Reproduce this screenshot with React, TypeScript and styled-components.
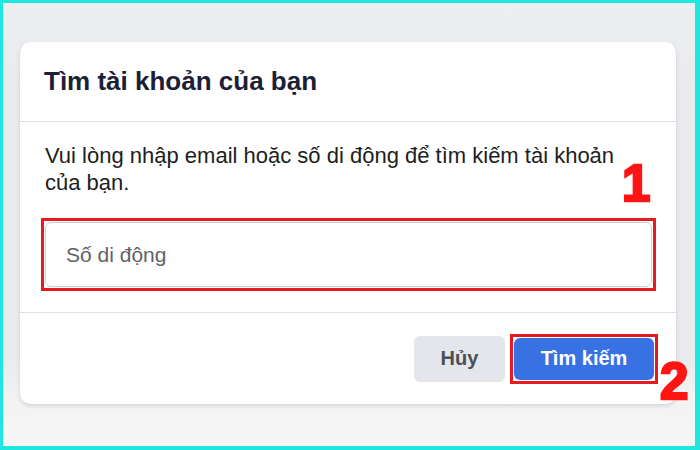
import React from "react";
import styled, { createGlobalStyle } from "styled-components";

const Global = createGlobalStyle`
  html, body { margin: 0; padding: 0; }
  body { font-family: "Liberation Sans", Arial, sans-serif; }
  * { box-sizing: border-box; }
`;

const Frame = styled.div`
  position: relative;
  width: 700px;
  height: 450px;
  border: 3px solid #1ee8dd;
  border-right-width: 5px;
  border-bottom-width: 4px;
  background: linear-gradient(180deg, #eceef0 0%, #e9ebee 20%, #e9ebee 80%, #f3f3f4 90%, #f6f6f6 100%);
  padding: 39px 0 0 17px;
  overflow: hidden;
`;

const Card = styled.div`
  width: 656px;
  height: 362px;
  background: #ffffff;
  border-radius: 10px;
  box-shadow: 0 2px 4px rgba(0, 0, 0, 0.12), 0 0 1px rgba(0, 0, 0, 0.1);
  display: flex;
  flex-direction: column;
`;

const Header = styled.div`
  height: 80px;
  display: flex;
  align-items: center;
  padding: 0 24px;
  border-bottom: 1px solid #dddfe2;
`;

const Title = styled.h2`
  margin: 0;
  font-size: 26px;
  font-weight: 700;
  color: #1b2036;
`;

const Body = styled.div`
  padding: 20px 20px 21px 21px;
  border-bottom: 1px solid #dddfe2;
`;

const Text = styled.p`
  margin: 0 0 22px;
  padding: 0 4px;
  font-size: 22px;
  line-height: 27px;
  color: #1c1e21;
`;

const Marked = styled.div<{ $pad: number }>`
  border: 3px solid #e61a1f;
  padding: ${(p) => p.$pad}px;
`;

const Input = styled.div`
  height: 65px;
  border: 1px solid #ccd0d5;
  border-radius: 6px;
  display: flex;
  align-items: center;
  padding: 0 20px;
  font-size: 21px;
  color: #606266;
`;

const Footer = styled.div`
  flex: 1;
  display: flex;
  align-items: center;
  justify-content: flex-end;
  gap: 5px;
  padding: 0 18px 0 0;
`;

const Button = styled.div<{ $primary?: boolean }>`
  height: ${(p) => (p.$primary ? 42 : 46)}px;
  width: ${(p) => (p.$primary ? 140 : 91)}px;
  border-radius: 6px;
  display: flex;
  align-items: center;
  justify-content: center;
  font-size: 20px;
  font-weight: 700;
  background: ${(p) => (p.$primary ? "#3871e2" : "#e4e6eb")};
  color: ${(p) => (p.$primary ? "#ffffff" : "#4b4f56")};
`;

const StepNumber = styled.span<{ $x: number; $y: number }>`
  position: absolute;
  left: ${(p) => p.$x}px;
  top: ${(p) => p.$y}px;
  font-family: "Liberation Sans", Arial, sans-serif;
  font-weight: 700;
  font-size: 51px;
  line-height: 1;
  color: #ff1414;
  -webkit-text-stroke: 2.5px #ff1414;
`;

export default function App() {
  return (
    <>
      <Global />
      <Frame>
        <Card>
          <Header>
            <Title>Tìm tài khoản của bạn</Title>
          </Header>
          <Body>
            <Text>Vui lòng nhập email hoặc số di động để tìm kiếm tài khoản của bạn.</Text>
            <Marked $pad={1}>
              <Input>Số di động</Input>
            </Marked>
          </Body>
          <Footer>
            <Button>Hủy</Button>
            <Marked $pad={1}>
              <Button $primary>Tìm kiếm</Button>
            </Marked>
          </Footer>
        </Card>
        <StepNumber $x={619} $y={155}>1</StepNumber>
        <StepNumber $x={657} $y={353}>2</StepNumber>
      </Frame>
    </>
  );
}
